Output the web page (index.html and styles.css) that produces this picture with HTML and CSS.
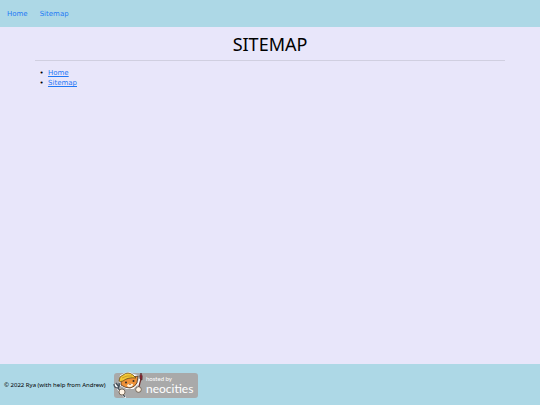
FILE: index.html
```
<!DOCTYPE html>
<html lang="en">
<head>
    <meta charset="utf-8">
    <title>Sitemap</title>
    <link rel="stylesheet" href="styles.css">
</head>
<body>
    <nav class="navbar">
        <a href="index.html">Home</a>
        <a href="#">Sitemap</a>
    </nav>

    <main class="content">
        <h1>SITEMAP</h1>
        <hr>
        <ul>
            <li><a href="index.html">Home</a></li>
            <li><a href="#">Sitemap</a></li>
        </ul>
    </main>

    <footer class="footer">
        <p>© 2022 Rya (with help from Andrew)</p>
        <a href="#" class="badge" aria-label="hosted by neocities">
            <svg width="86" height="28" viewBox="0 0 86 28">
                <rect x="1" y="2" width="84" height="25" rx="3" fill="#a9a9a9"/>
                <text class="badge-small" x="33" y="10">hosted by</text>
                <text class="badge-name" x="33" y="22">neocities</text>
                <!-- white outline round the cat and its tools -->
                <g fill="#fff" stroke="#fff" stroke-width="2" stroke-linejoin="round" stroke-linecap="round">
                    <path d="M7 9 L8 5 L12 3 L16 2 L20 4 L24 5 L25 12 L20 17 L14 17 L8 14 Z"/>
                    <path d="M2 14 L12 26 M28 4 L25 18"/>
                </g>
                <!-- fork -->
                <path d="M1 13 Q1 17 5 17 L12 26 M3 12 L6 16 M6 12 Q7 15 5 17" fill="none" stroke="#46525c" stroke-width="1.3"/>
                <!-- brush -->
                <path d="M28 8 L25 19" stroke="#6b2f2d" stroke-width="1.3"/>
                <path d="M28 2 Q30 5 29 9 L27 8 Q26 5 28 2 Z" fill="#8c2432" stroke="#402020" stroke-width=".6"/>
                <!-- head -->
                <path d="M8 9 L8 14 Q12 17 17 17 Q22 16 24 12 L25 5 L19 6 Z" fill="#ee9138" stroke="#433025" stroke-width=".8"/>
                <path d="M14 14 Q17 12 20 13 Q20 16 17 16 Q14 16 14 14 Z" fill="#fff0d8"/>
                <circle cx="13" cy="11.5" r="1" fill="#332b25"/>
                <circle cx="20.5" cy="10" r="1" fill="#332b25"/>
                <path d="M16 13 L18 13 L17 14 Z" fill="#433025"/>
                <!-- hard hat -->
                <path d="M6 10 Q6 5 10 4 Q15 0 20 4 L23 7 Q15 6 10 10 Q7 11 6 10 Z" fill="#f3c936" stroke="#694d1b" stroke-width=".8"/>
                <path d="M9 7 Q14 4 19 5" fill="none" stroke="#b88621" stroke-width=".7"/>
                <!-- paws -->
                <circle cx="9" cy="21" r="3" fill="#fff4e5" stroke="#51402f" stroke-width=".7"/>
                <circle cx="25.5" cy="18.5" r="2.8" fill="#fff4e5" stroke="#51402f" stroke-width=".7"/>
            </svg>
        </a>
    </footer>
</body>
</html>
```

FILE: styles.css
```
html, body {
    box-sizing: border-box;
}

body {
    display: flex;
    flex-direction: column;
    min-height: 100vh;
    margin: 0;
    background-color: #e8e6fa;
    color: black;
    font-family: Verdana, "DejaVu Sans", sans-serif;
    font-size: 7px;
    line-height: 10px;
}

a {
    color: #1f78f5;
}

.navbar {
    display: flex;
    background-color: lightblue;
    padding: 2px 0px;
}

.navbar a {
    padding: 7px 5px 6px 7px;
    text-decoration: none;
}

.content {
    flex: 1;
    padding: 0px 35px;
}

h1, .footer {
    font-family: Verdana, "Noto Sans", sans-serif;
}

h1 {
    margin: 7px 0px 6px;
    font-size: 18px;
    font-weight: normal;
    line-height: 20px;
    text-align: center;
}

hr {
    height: 1px;
    margin: 0px;
    border: none;
    background-color: #d0cfe0;
}

ul {
    margin: 7px 0px;
    padding-left: 13px;
    list-style-type: "•\00a0\00a0";
}

.footer {
    display: flex;
    align-items: center;
    gap: 7px;
    padding: 7px 4px 6px;
    background-color: lightblue;
    font-size: 6px;
}

.footer p {
    margin: 0px;
}

.badge svg {
    display: block;
}

.badge text {
    fill: white;
    font-family: Lato, sans-serif;
}

.badge-small {
    font-size: 6px;
}

.badge-name {
    font-size: 12px;
}
```
